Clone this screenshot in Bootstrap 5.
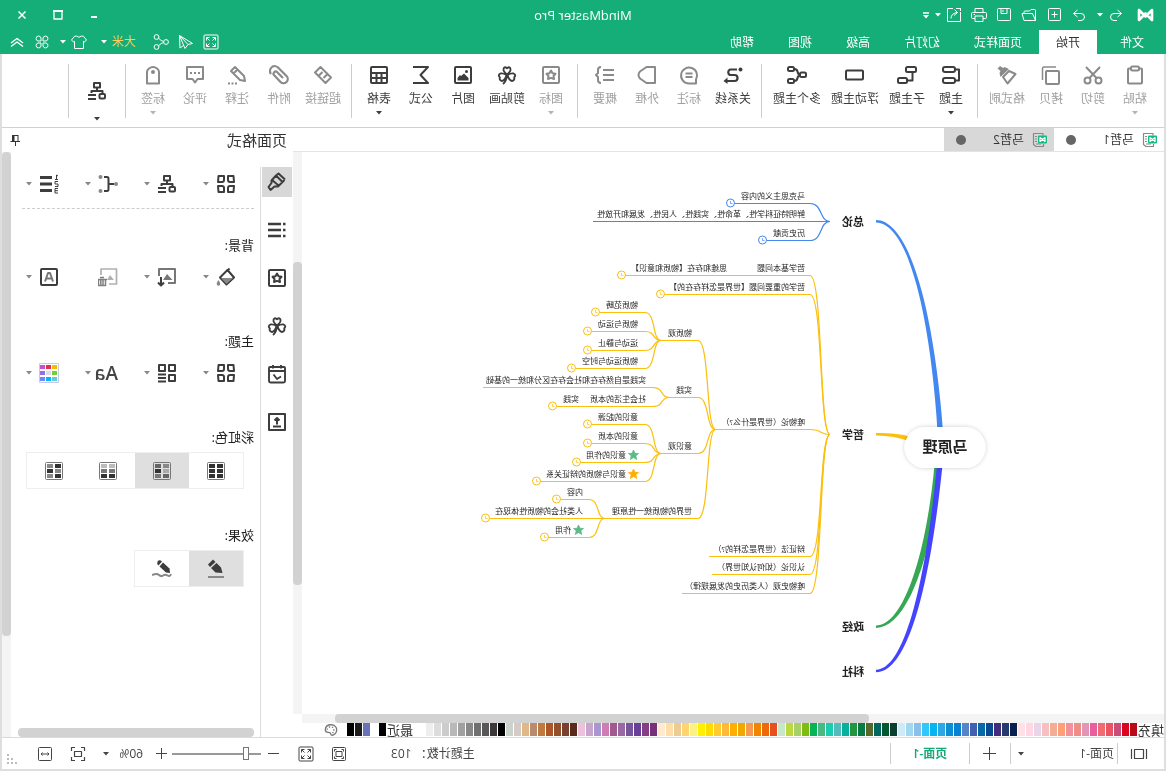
<!DOCTYPE html>
<html lang="zh-CN">
<head>
<meta charset="utf-8">
<meta name="viewport" content="width=device-width, initial-scale=1">
<title>MindMaster Pro</title>
<link rel="stylesheet" href="https://cdn.jsdelivr.net/npm/bootstrap@5.3.0/dist/css/bootstrap.min.css">
<style>
:root{--green:#16ae78;--ink:#3d3d3d;--edge:#dedede;--thumb:#d2d2d2;--track:#f4f4f4}
body{font:12px/16px "Open Sans","Noto Sans CJK SC",sans-serif;color:#333;background:#fff;overflow:hidden}
.mirror-view{transform:scaleX(-1)}
svg{display:block;fill:none;stroke:currentColor;stroke-width:2;stroke-linejoin:round}
button,select{font:inherit;color:inherit;background:none;border:0;padding:0}
.ico{width:20px;height:20px}
.ico-s{width:16px;height:16px;stroke-width:1}
.tri{width:6px;height:4px;fill:currentColor;stroke:none}
/* header */
.top-head{background:var(--green);color:#fff}
.title-row{height:30px;grid-template-columns:1fr auto 1fr}
.tool-btn{width:25px;height:24px;display:flex;align-items:center;justify-content:center}
.tri-btn{width:8px;height:24px;display:flex;align-items:center;justify-content:center}
.app-title{font-size:13px}
.menu-row{height:24px}
.menu-left{padding-left:5px}
.menu-right{padding-right:5px}
.menu-tab{padding:0 17px;height:24px;line-height:25px;color:#fff}
.menu-tab.on{background:#fff;color:#333;margin-left:6px}
.user-name{color:#ffcc5c;margin:0 4px 0 12px}
.win-btn{width:36px;height:28px;display:flex;align-items:center;justify-content:center}
/* ribbon */
.frame{border:solid var(--edge);border-width:0 2px 2px;min-height:0}
.ribbon{height:74px;border-bottom:1px solid #d0d0d0;padding:10px 8px 8px}
.rib{min-width:42px;padding:0 5px;display:flex;flex-direction:column;align-items:center;color:var(--ink);height:56px}
.rib svg.ico{margin-top:1px}
.rib span{margin:6px 0 4px;white-space:nowrap}
.rib.off{color:#8a8a8a}
.rib.off span{color:#a0a0a0}
.rib.off .tri{color:#b4b4b4}
.rib-wide{min-width:45px}
.rule{width:1px;background:#ccc;height:54px;margin:0 5px 0 6px}
/* document tabs */
.doc-row{height:24px;border-bottom:1px solid #e4e4e4}
.doc-tab{height:23px;width:110px;padding:0 12px 0 6px}
.doc-tab.on{background:#d8d8d8}
.dot{width:10px;height:10px;border-radius:50%;background:#666}
/* scroll bars */
.vbar{width:9px;background:var(--track)}
.hbar{height:9px;background:var(--track);margin-right:9px}
.thumb{background:var(--thumb);border-radius:4px}
/* map */
.map-view{background:#fff}
.map-view text{font-size:8px;fill:#222;stroke:none}
.map-view .branch{font-size:11px;font-weight:700;fill:#222}
.map-view .central{font-size:15px;font-weight:700;fill:#222}
/* palette */
.pal{height:14px;font-size:13px;line-height:14px}
.pal i{display:block;width:7px;height:13px;margin-right:1px}
/* side panel */
.side{width:291px}
.side-title{height:24px;font-size:15px;line-height:24px;padding:0 7px 0 6px}
.strip{width:33px;border-right:1px solid #dcdcdc;gap:18px;margin-top:15px;padding-left:1px}
.strip button{width:30px;height:30px;display:flex;align-items:center;justify-content:center;color:var(--ink)}
.strip button.on{background:#d8d8d8}
.props{padding-left:6px;margin-top:17px;color:var(--ink)}
.prow{height:30px}
.plabel + .prow{margin-top:7px}
.pcell{width:59px;padding-left:18px;gap:7px;display:flex;align-items:center;height:30px}
.pcell .tri{color:#888}
.plabel{font-size:13px;line-height:20px;margin-top:39px;color:#222}
.dash{border-top:1px dashed #ccc;width:232px;margin-top:9px}
.dash + .plabel{margin-top:26px}
.seg + .plabel{margin-top:36px}
.seg{border:1px solid #eee;width:max-content;margin:5px 0 0 10px;height:37px}
.seg button{width:54px;display:flex;align-items:center;justify-content:center}
.seg button.on{background:#dfdfdf}
.aa{font-size:19px;font-weight:600;line-height:20px;width:22px;margin-right:-2px;color:#444}
.hthumb{width:236px;height:9px}
/* status bar */
.status{height:32px;border-top:1px solid #dcdcdc;color:#444}
.bar{width:1px;height:21px;background:#ccc}
.status select{appearance:none;outline:0}
.status .thin{stroke-width:1;shape-rendering:crispEdges}
.page-pick{padding:0 7px 0 3px}
.page-pick select{width:90px}
.zoom-pick{margin:0 12px 0 9px}
.zoom-pick select{width:34px}
.page-name{color:#16a878;width:78px}
.zoom{appearance:none;width:89px;height:14px;margin:0;background:linear-gradient(#999,#999) center/100% 2px no-repeat}
.zoom::-webkit-slider-thumb{appearance:none;width:6px;height:13px;background:#fff;border:1px solid #777}
</style>
</head>
<body>
<svg width="0" height="0" class="position-absolute">
<symbol id="tri" viewBox="0 0 6 4"><path d="M0 0H6L3 3.6Z"/></symbol>
<symbol id="undo" viewBox="0 0 16 16"><path d="M6.500 3 2.500 6.500 6.500 10M2.500 6.500H10a3.500 3.500 0 0 1 0 7H7"/></symbol>
<symbol id="redo" viewBox="0 0 16 16"><path d="M9.500 3 13.500 6.500 9.500 10M13.500 6.500H6a3.500 3.500 0 0 0 0 7H9"/></symbol>
<symbol id="new" viewBox="0 0 16 16"><rect x="1.500" y="1.500" width="12" height="12" rx="1"/><path d="M7.500 4.500v6M4.500 7.500h6"/></symbol>
<symbol id="open" viewBox="0 0 16 16"><path d="M1.500 13.500V3.500q0-1 1-1H6l1.500 1.500H12q1 0 1 1V6M1.500 13.500H13L15 6.500H4.500L1.500 13.500"/></symbol>
<symbol id="save" viewBox="0 0 16 16"><rect x="1.500" y="1.500" width="13" height="12" rx="1"/><path d="M5 1.500v5h6v-5M9 3v2"/></symbol>
<symbol id="print" viewBox="0 0 16 16"><path d="M4 5V1.500h8V5M4 11.500H1.500q-1 0-1-1V6.500q0-1 1-1h13q1 0 1 1v4q0 1-1 1H12M4 9h8v5.500H4zM12 7.500h1.500"/></symbol>
<symbol id="export" viewBox="0 0 16 16"><path d="M9 1.500H14.500V14.500H1.500V5M1 1.500H6M1.500 1.500V4M11 11.500Q11 6.500 5 5.500M7.500 2.500 4.500 5.500 8 8.500"/></symbol>
<symbol id="full" viewBox="0 0 16 16"><rect x="1" y="1" width="14" height="14" rx="1"/><path d="M3.500 6.500v-3h3M3.500 3.500 6.500 6.500M9.500 3.500h3v3M12.500 3.500 9.500 6.500M3.500 9.500v3h3M3.500 12.500 6.500 9.500M12.500 9.500v3h-3M12.500 12.500 9.500 9.500"/></symbol>
<symbol id="send" viewBox="0 0 16 16"><path d="M14.500 1.500 1.500 9.500 6 10.500 9 14.500ZM14.500 1.500 6 10.500M14.500 1.500 14 14 10.500 11.500"/></symbol>
<symbol id="share" viewBox="0 0 16 16"><circle cx="3" cy="8" r="2.400"/><circle cx="12.500" cy="3" r="2.400"/><circle cx="12.500" cy="13" r="2.400"/><path d="M5.400 7.500Q8 7 10.300 4.300M5.400 8.500Q8 9 10.300 11.700"/></symbol>
<symbol id="shirt" viewBox="0 0 16 16"><path d="M5.500 2Q8 4.500 10.500 2L12.500 2.300 15.500 6 13.500 8 12.500 7.300V14.500H3.500V7.300L2.500 8 .5 6 3.500 2.300Z"/></symbol>
<symbol id="petals" viewBox="0 0 16 16"><path d="M7 7H4a2.500 2.500 0 1 1 3-3ZM9 7V4a2.500 2.500 0 1 1 3 3ZM7 9V12a2.500 2.500 0 1 1-3-3ZM9 9H12a2.500 2.500 0 1 1-3 3Z"/></symbol>
<symbol id="chev" viewBox="0 0 16 16"><path d="M2 9 8 4.500 14 9M2 12.500 8 8 14 12.500" stroke-width="1.400"/></symbol>
<symbol id="paste" viewBox="0 0 20 20"><rect x="3" y="3.500" width="14" height="15" rx="1"/><rect x="6" y="1.500" width="8" height="4" rx="1.500" fill="#fff"/></symbol>
<symbol id="cut" viewBox="0 0 20 20"><circle cx="4.500" cy="15.500" r="3"/><circle cx="15.500" cy="15.500" r="3"/><path d="M3 2 13.500 13M17 2 6.500 13"/></symbol>
<symbol id="copy" viewBox="0 0 20 20"><rect x="2" y="6" width="13" height="13" rx="1"/><path d="M5 2H17q1.500 0 1.500 1.500V15" stroke-width="1.500"/></symbol>
<symbol id="brush" viewBox="0 0 20 20"><path d="M1.500 9 8 6 14 12 9.500 18.500Z"/><path d="M8 4 16.500 12 17.500 8 16.500 6 19.500 3.500 17 1 14 3 12.500 2Z" fill="currentColor" stroke="none"/></symbol>
<symbol id="topic" viewBox="0 0 20 20"><rect x="6" y="2" width="12" height="5" rx="2"/><rect x="6" y="13" width="12" height="5" rx="2"/><path d="M6 4.500H2V15.500H6"/></symbol>
<symbol id="sub" viewBox="0 0 20 20"><rect x="1" y="2" width="10" height="5" rx="1.500"/><rect x="10" y="13" width="9" height="5" rx="1.500"/><path d="M4.500 7V15.500H10"/></symbol>
<symbol id="float" viewBox="0 0 20 20"><rect x="2" y="5.500" width="17" height="9" rx="1"/></symbol>
<symbol id="multi" viewBox="0 0 20 20"><rect x="1" y="7.500" width="6" height="4.500" rx="1.500"/><rect x="13" y="2" width="6" height="4" rx="1.500"/><rect x="13" y="14" width="6" height="4" rx="1.500"/><path d="M7 9.500Q9 9.500 9.500 6.500 10 4 13 4M7 10.500Q9 10.500 9.500 13 10 16 13 16"/></symbol>
<symbol id="rel" viewBox="0 0 20 20"><path d="M6 4.500H13a3 3 0 0 1 0 5.500H8.500a3 3 0 0 0 0 6H16" stroke-width="2.200"/><circle cx="2.500" cy="4.500" r="2" fill="currentColor" stroke="none"/><path d="M15.500 12.500 19.500 16 15.500 19Z" fill="currentColor" stroke="none"/></symbol>
<symbol id="callout" viewBox="0 0 20 20"><path d="M3 18.500V14.500A8 8 0 1 1 10 18.500ZM6.500 8.500h7M6.500 12h7"/></symbol>
<symbol id="bound" viewBox="0 0 20 20"><path d="M2 2H10.500L17 6.500Q18.500 8 18.500 10T17 13.500L10.500 18H2Z"/></symbol>
<symbol id="summary" viewBox="0 0 20 20"><path d="M1 5H12M1 10H12M1 15H12M14 2q3 0 3 3V8l2 2-2 2v3q0 3-3 3"/></symbol>
<symbol id="star" viewBox="0 0 20 20"><rect x="2" y="2" width="16" height="16" rx="1"/><path d="M10 5.500 11.500 8.200 14.500 8.800 12.500 11 13 14 10 12.900 7 14 7.500 11 5.500 8.800 8.500 8.200Z"/></symbol>
<symbol id="clover" viewBox="0 0 20 20"><path d="M10 9.500Q6 6 6.500 4.200 7 1 10 3.200 13 1 13.500 4.200 14 6 10 9.500ZM9.500 10Q6 8 3.500 8.500 .5 10 2.800 12.300 2 15.500 5 16 8 15.500 9.500 10ZM10.500 10Q14 8 16.500 8.500 19.500 10 17.200 12.300 18 15.500 15 16 12 15.500 10.500 10ZM10 10Q10.500 16 14 19" stroke-width="1.900"/></symbol>
<symbol id="image" viewBox="0 0 20 20"><rect x="2" y="2" width="16" height="16" rx="1"/><path d="M4.500 15.500V13L9 8.500 12 11 13 10 15.500 13V15.500Z" fill="currentColor" stroke="none"/><circle cx="6.500" cy="6.500" r="1.500" fill="currentColor" stroke="none"/></symbol>
<symbol id="sigma" viewBox="0 0 20 20"><path d="M18 2H3L10.500 10 3 18H18"/></symbol>
<symbol id="tbl" viewBox="0 0 20 20"><rect x="2" y="2" width="16" height="16" rx="1"/><path d="M2 8H18M2 13H18M7.500 8V18M12.500 8V18"/></symbol>
<symbol id="link" viewBox="0 0 20 20"><path d="M9.500 13 5.500 9 12.500 2 18 7.500 14 11.500M10.500 7 14.500 11 7.500 18 2 12.500 6 8.500"/></symbol>
<symbol id="clip" viewBox="0 0 20 20"><path d="M6 13 12.500 6.500a2.500 2.500 0 0 1 3 3L8.500 17A4 4 0 0 1 2.500 11L10.500 3A4.500 4.500 0 0 1 18 9" stroke-width="2.200"/></symbol>
<symbol id="pencil" viewBox="0 0 20 20"><path d="M2 16 3 11 12 2 16 6 7 15ZM9.500 4.500 13.500 8.500"/><path d="M10 18.500h9" stroke-dasharray="2 1.500"/></symbol>
<symbol id="comment" viewBox="0 0 20 20"><path d="M2 2H18V14H12.500L10 17.500 7.500 14H2Z"/><path d="M5 8h10" stroke-dasharray="2 2"/></symbol>
<symbol id="tag" viewBox="0 0 20 20"><path d="M4 18.500V7Q4 5 6 3.500 10 .5 14 3.500 16 5 16 7V18.500Z"/><circle cx="10" cy="7" r="2" fill="currentColor" stroke="none"/></symbol>
<symbol id="layout" viewBox="0 0 20 20"><rect x="7" y="2" width="6" height="4.500"/><path d="M10 6.500V10M4.500 13V10H15.500V12"/><rect x="2" y="13" width="5.500" height="4.500" rx="1"/><path d="M11 14H19M11 18H19" stroke-width="2"/></symbol>
<symbol id="roller" viewBox="0 0 20 20"><path d="M2 7.500 8.500 1.500 11 3.500 15.500 8.500V11L18.500 15 16.500 18 12.500 14.500H9L2.500 8M4.500 10 11 3.500M8.500 13.500 15.500 7.500"/></symbol>
<symbol id="list" viewBox="0 0 20 20"><path d="M1.500 4h2.500M1.500 10h2.500M1.500 16h2.500M6 4H19M6 10H19M6 16H19" stroke-width="2.600"/></symbol>
<symbol id="cal" viewBox="0 0 20 20"><path d="M2 4q0-1 1-1H17q1 0 1 1V17q0 1.500-1.500 1.500H3.500Q2 18.500 2 17ZM2 7H18M6 1V4.500M14 1V4.500M6 12.500 10 15 13.500 10.500" stroke-width="1.900"/></symbol>
<symbol id="upl" viewBox="0 0 20 20"><path d="M2 2H18V18H2ZM6 14.500h8M10 12.500V6M7.500 8.500 10 6 12.500 8.500"/></symbol>
<symbol id="four" viewBox="0 0 20 20"><path d="M2.500 2H8V6Q8 8 6 8H2ZM12 2H17.500L18 8H14Q12 8 12 6ZM2 12H6Q8 12 8 14V18H2.500ZM14 12H18L17.500 18H12V14Q12 12 14 12Z"/></symbol>
<symbol id="fourlist" viewBox="0 0 20 20"><path d="M2 2H8V8H2ZM12 2H18V8H12ZM2 12H8V18H2Z"/><path d="M11 11.500H19M11 15H19M11 18.500H19" stroke-width="1.800"/></symbol>
<symbol id="brace" viewBox="0 0 20 20"><path d="M4 10H9M14 3H11Q9.500 3 9.500 5V15Q9.500 17 11 17H14"/><g fill="#888" stroke="none"><circle cx="2" cy="10" r="2"/><circle cx="17.500" cy="3" r="2"/><circle cx="17.500" cy="17" r="2"/></g></symbol>
<symbol id="nums" viewBox="0 0 20 20"><path d="M7 3.500H19M7 10H19M7 16.500H19" stroke-width="3"/><path d="M1 2 2.500 1V5M1 5.500H4M1 7.500H4V10H1V12.500H4M1 14.500H4V19H1M1 16.700H4" stroke-width="1"/></symbol>
<symbol id="bucket" viewBox="0 0 20 20"><path d="M6.500 1.500 9 4"/><path d="M8.500 3 2 10.500 9.500 17.500 16 10.500Z"/><path d="M3 11H15L9.500 17Z" fill="#888" stroke="none"/><path d="M17.500 13Q20 16 19 18 17.500 19.500 16 18 15.200 16 17.500 13Z" fill="#888" stroke="none"/></symbol>
<symbol id="imgdown" viewBox="0 0 20 20"><path d="M9 16H2V2H18V9" stroke="#777"/><path d="M16 10V18M13 15.500 16 18.500 19 15.500"/><path d="M4.500 13 10 7 14 13Z" fill="#777" stroke="none"/></symbol>
<symbol id="imgdel" viewBox="0 0 20 20"><path d="M9 17H1.500V2H17V8" stroke-width="1.700"/><path d="M4 13 8 8 11 13Z" fill="currentColor" stroke="none"/><path d="M11 12.500H21M12.500 13V18.500H19.500V13M15 13v5M17.200 13v5M14 10.500h4" stroke="#808080" stroke-width="1.500"/></symbol>
<symbol id="boxa" viewBox="0 0 20 20"><rect x="2" y="2" width="16" height="16" rx="1"/><path d="M6 14.500 9 6H11L14 14.500M7.500 11.500H12.500" stroke="#777"/></symbol>
<symbol id="fit" viewBox="0 0 16 16"><path d="M1.500 5V1.500H5M11 1.500h3.500V5M14.500 11v3.500H11M5 14.500H1.500V11M4.500 5.500h7v5h-7z" stroke-width="1.200"/></symbol>
<symbol id="wide" viewBox="0 0 16 16"><rect x="1.500" y="1.500" width="13" height="13" rx="1"/><path d="M4 8h8M5.500 6.500 4 8 5.500 9.500M10.500 6.500 12 8 10.500 9.500"/></symbol>
<symbol id="focus" viewBox="0 0 16 16"><rect x="1.500" y="1.500" width="13" height="13" rx="1"/><path d="M5 5.500h6v5H5zM3.500 5.500v-2h2M10.500 3.500h2v2M12.500 10.500v2h-2M5.500 12.500h-2v-2"/></symbol>
<symbol id="slide" viewBox="0 0 18 16"><path d="M1.500 3v10M16.500 3v10M4.500 3.500h9v9h-9z" stroke-width="1.200"/></symbol>
<symbol id="pin" viewBox="0 0 12 12"><path d="M3 1v6M3 1.500H8M1 7.500H10.500M5.500 7.500V12" stroke-width="1"/><path d="M6.500 1H9V8H6.500Z" fill="currentColor" stroke="none"/></symbol>
<symbol id="doc" viewBox="0 0 16 16"><path d="M5 3.500V1.500H14.500V12.500L12 14.500H4.500V12M7 12h5M11 4.500h2M11 7h2M11 9.500h2" stroke="#888" stroke-width="1.200"/><rect x="1" y="3.500" width="9" height="8" rx="1" fill="#12b981" stroke="none"/><path d="M3 9.500V5.500L8 9.500V5.500Z" stroke="#fff" stroke-width="1.200"/></symbol>
<symbol id="logo" viewBox="0 0 17 14"><path d="M2 12V2L8.500 8.500 15 2V12L8.500 5.500Z" stroke-width="2.600"/></symbol>
<symbol id="palette" viewBox="0 0 16 16"><path d="M8 2C3.500 2 1.500 5 1.500 8S4 14 7 14c2 0 1-2.500 2.500-3 2-.5 5 .5 5-3S12 2 8 2Z" stroke="#777" stroke-width="1.500"/><path d="M4 8h1.500M5.500 5h1.500M9 4.500h1.500M11.500 7h1.500M5 11h1.500" stroke="#777" stroke-width="1.700"/></symbol>
</svg>

<div class="mirror-view vh-100 d-flex flex-column">
<header class="top-head">
  <div class="title-row d-grid align-items-center">
    <div class="d-flex align-items-center ps-2">
      <svg class="ms-1 me-2" width="17" height="14"><use href="#logo"/></svg>
      <button class="tool-btn" aria-label="撤销"><svg class="ico-s"><use href="#undo"/></svg></button>
      <button class="tri-btn me-1" aria-label="撤销列表"><svg class="tri"><use href="#tri"/></svg></button>
      <button class="tool-btn" aria-label="重做"><svg class="ico-s"><use href="#redo"/></svg></button>
      <button class="tool-btn" aria-label="新建"><svg class="ico-s"><use href="#new"/></svg></button>
      <button class="tool-btn" aria-label="打开"><svg class="ico-s"><use href="#open"/></svg></button>
      <button class="tool-btn" aria-label="保存"><svg class="ico-s"><use href="#save"/></svg></button>
      <button class="tool-btn" aria-label="打印"><svg class="ico-s"><use href="#print"/></svg></button>
      <button class="tool-btn" aria-label="导出"><svg class="ico-s"><use href="#export"/></svg></button>
      <button class="tri-btn me-1" aria-label="导出列表"><svg class="tri"><use href="#tri"/></svg></button>
      <button class="tri-btn flex-column" aria-label="自定义"><svg width="6" height="3"><path d="M0 1H6" stroke-width="1.500"/></svg><svg class="tri"><use href="#tri"/></svg></button>
    </div>
    <div class="app-title">MindMaster Pro</div>
    <div class="d-flex justify-content-end pe-1">
      <button class="win-btn" aria-label="最小化"><svg width="10" height="10"><path d="M2 7H8"/></svg></button>
      <button class="win-btn" aria-label="最大化"><svg width="10" height="10"><path d="M1 1H9V9H1Z" stroke-width="1.300"/><path d="M0 1H10"/></svg></button>
      <button class="win-btn" aria-label="关闭"><svg width="10" height="10"><path d="M1.500 1.500 8.500 8.500M8.500 1.500 1.500 8.500" stroke-width="1.500"/></svg></button>
    </div>
  </div>
  <div class="menu-row d-flex justify-content-between">
    <div class="menu-left d-flex">
      <button class="menu-tab">文件</button><button class="menu-tab on">开始</button><button class="menu-tab">页面样式</button><button class="menu-tab">幻灯片</button><button class="menu-tab">高级</button><button class="menu-tab">视图</button><button class="menu-tab">帮助</button>
    </div>
    <div class="menu-right d-flex align-items-center">
      <button class="tool-btn" aria-label="全屏"><svg class="ico-s"><use href="#full"/></svg></button>
      <button class="tool-btn" aria-label="发送"><svg class="ico-s"><use href="#send"/></svg></button>
      <button class="tool-btn" aria-label="分享"><svg class="ico-s"><use href="#share"/></svg></button>
      <button class="user-name">大米</button>
      <button class="tri-btn me-2" aria-label="账户"><svg class="tri"><use href="#tri"/></svg></button>
      <button class="tool-btn" aria-label="皮肤"><svg class="ico-s"><use href="#shirt"/></svg></button>
      <button class="tri-btn" aria-label="皮肤列表"><svg class="tri"><use href="#tri"/></svg></button>
      <button class="tool-btn ms-1" aria-label="应用"><svg class="ico-s"><use href="#petals"/></svg></button>
      <button class="tool-btn" aria-label="收起"><svg class="ico-s"><use href="#chev"/></svg></button>
    </div>
  </div>
</header>

<div class="frame flex-grow-1 d-flex flex-column">
<div class="ribbon d-flex">
  <button class="rib off"><svg class="ico"><use href="#paste"/></svg><span>粘贴</span><svg class="tri"><use href="#tri"/></svg></button>
  <button class="rib off"><svg class="ico"><use href="#cut"/></svg><span>剪切</span></button>
  <button class="rib off"><svg class="ico"><use href="#copy"/></svg><span>拷贝</span></button>
  <button class="rib off"><svg class="ico"><use href="#brush"/></svg><span>格式刷</span></button>
  <div class="rule"></div>
  <button class="rib"><svg class="ico"><use href="#topic"/></svg><span>主题</span><svg class="tri"><use href="#tri"/></svg></button>
  <button class="rib"><svg class="ico"><use href="#sub"/></svg><span>子主题</span></button>
  <button class="rib"><svg class="ico"><use href="#float"/></svg><span>浮动主题</span></button>
  <button class="rib"><svg class="ico"><use href="#multi"/></svg><span>多个主题</span></button>
  <div class="rule"></div>
  <button class="rib"><svg class="ico"><use href="#rel"/></svg><span>关系线</span></button>
  <button class="rib off"><svg class="ico"><use href="#callout"/></svg><span>标注</span></button>
  <button class="rib off"><svg class="ico"><use href="#bound"/></svg><span>外框</span></button>
  <button class="rib off"><svg class="ico"><use href="#summary"/></svg><span>概要</span></button>
  <div class="rule"></div>
  <button class="rib off"><svg class="ico"><use href="#star"/></svg><span>图标</span><svg class="tri"><use href="#tri"/></svg></button>
  <button class="rib"><svg class="ico"><use href="#clover"/></svg><span>剪贴画</span></button>
  <button class="rib"><svg class="ico"><use href="#image"/></svg><span>图片</span></button>
  <button class="rib"><svg class="ico"><use href="#sigma"/></svg><span>公式</span></button>
  <button class="rib"><svg class="ico"><use href="#tbl"/></svg><span>表格</span><svg class="tri"><use href="#tri"/></svg></button>
  <div class="rule"></div>
  <button class="rib off"><svg class="ico"><use href="#link"/></svg><span>超链接</span></button>
  <button class="rib off"><svg class="ico"><use href="#clip"/></svg><span>附件</span></button>
  <button class="rib off"><svg class="ico"><use href="#pencil"/></svg><span>注释</span></button>
  <button class="rib off"><svg class="ico"><use href="#comment"/></svg><span>评论</span></button>
  <button class="rib off"><svg class="ico"><use href="#tag"/></svg><span>标签</span><svg class="tri"><use href="#tri"/></svg></button>
  <div class="rule"></div>
  <button class="rib rib-wide pt-3" aria-label="布局"><svg class="ico mb-3 flex-shrink-0"><use href="#layout"/></svg><svg class="tri flex-shrink-0"><use href="#tri"/></svg></button>
  <div class="rule"></div>
</div>

<div class="flex-grow-1 d-flex" style="min-height:0">
  <main class="flex-grow-1 d-flex flex-column" style="min-width:0">
    <div class="doc-row d-flex">
      <div class="doc-tab d-flex align-items-center"><svg class="ico-s me-2"><use href="#doc"/></svg>马哲1<span class="dot ms-auto"></span></div>
      <div class="doc-tab on d-flex align-items-center"><svg class="ico-s me-2"><use href="#doc"/></svg>马哲2<span class="dot ms-auto"></span></div>
    </div>
    <div class="flex-grow-1 d-flex" style="min-height:0">
      <svg class="map-view flex-grow-1" id="map" height="562"></svg>
      <div class="vbar d-flex flex-column"><div style="flex:110"></div><div class="thumb" style="flex:323"></div><div style="flex:129"></div></div>
    </div>
    <div class="hbar d-flex"><div style="flex:295"></div><div class="thumb" style="flex:534"></div><div style="flex:33"></div></div>
    <div class="pal d-flex" id="pal"></div>
  </main>
  <aside class="side d-flex flex-column">
    <div class="side-title d-flex justify-content-between align-items-center">页面格式<svg width="12" height="12"><use href="#pin"/></svg></div>
    <div class="flex-grow-1 d-flex" style="min-height:0">
      <div class="strip d-flex flex-column">
        <button class="on" aria-label="页面格式"><svg class="ico"><use href="#roller"/></svg></button>
        <button aria-label="大纲"><svg class="ico"><use href="#list"/></svg></button>
        <button aria-label="图标"><svg class="ico"><use href="#star"/></svg></button>
        <button aria-label="剪贴画"><svg class="ico"><use href="#clover"/></svg></button>
        <button aria-label="任务"><svg class="ico"><use href="#cal"/></svg></button>
        <button aria-label="上传"><svg class="ico"><use href="#upl"/></svg></button>
      </div>
      <div class="props flex-grow-1 d-flex flex-column">
        <div class="prow d-flex">
          <button class="pcell" aria-label="样式"><svg class="ico"><use href="#four"/></svg><svg class="tri"><use href="#tri"/></svg></button>
          <button class="pcell" aria-label="布局"><svg class="ico"><use href="#layout"/></svg><svg class="tri"><use href="#tri"/></svg></button>
          <button class="pcell" aria-label="连接线"><svg class="ico"><use href="#brace"/></svg><svg class="tri"><use href="#tri"/></svg></button>
          <button class="pcell" aria-label="编号"><svg class="ico"><use href="#nums"/></svg><svg class="tri"><use href="#tri"/></svg></button>
        </div>
        <div class="dash"></div>
        <div class="plabel">背景:</div>
        <div class="prow d-flex">
          <button class="pcell" aria-label="背景色"><svg class="ico"><use href="#bucket"/></svg><svg class="tri"><use href="#tri"/></svg></button>
          <button class="pcell" aria-label="背景图"><svg class="ico"><use href="#imgdown"/></svg><svg class="tri"><use href="#tri"/></svg></button>
          <button class="pcell" aria-label="移除背景" style="color:#b0b0b0"><svg class="ico" overflow="visible"><use href="#imgdel"/></svg></button>
          <button class="pcell" aria-label="水印"><svg class="ico"><use href="#boxa"/></svg><svg class="tri"><use href="#tri"/></svg></button>
        </div>
        <div class="plabel">主题:</div>
        <div class="prow d-flex">
          <button class="pcell" aria-label="主题"><svg class="ico"><use href="#four"/></svg><svg class="tri"><use href="#tri"/></svg></button>
          <button class="pcell" aria-label="主题样式"><svg class="ico"><use href="#fourlist"/></svg><svg class="tri"><use href="#tri"/></svg></button>
          <button class="pcell" aria-label="主题字体"><span class="aa">Aa</span><svg class="tri"><use href="#tri"/></svg></button>
          <button class="pcell" aria-label="主题颜色"><svg class="ico" style="stroke:none"><rect x=".5" y=".5" width="19" height="19" stroke="#c5cbe2" stroke-width="1"/><path d="M2 2h5v4H2z" fill="#eec000"/><path d="M8 2h5v4H8z" fill="#e0304e"/><path d="M14 2h5v4h-5z" fill="#c552cc"/><path d="M2 8h5v4H2z" fill="#70cf3c"/><path d="M8 8h5v4H8z" fill="#ddd"/><path d="M14 8h5v4h-5z" fill="#926ee8"/><path d="M2 14h5v4H2z" fill="#62ccd8"/><path d="M8 14h5v4H8z" fill="#06b4fa"/><path d="M14 14h5v4h-5z" fill="#7286fa"/></svg><svg class="tri"><use href="#tri"/></svg></button>
        </div>
        <div class="plabel">彩虹色:</div>
        <div class="seg d-flex" id="rainbow"></div>
        <div class="plabel">效果:</div>
        <div class="seg d-flex">
          <button class="on" aria-label="钢笔"><svg class="ico"><path d="M2 18H18" stroke="#888"/><path d="M3.500 14 5 8.500 9.500 4 15 9 10.500 13.500Z" fill="currentColor" stroke="none"/><path d="M10.500 3 13 .5 18 5.500 16 8Z" fill="currentColor" stroke="none"/></svg></button>
          <button aria-label="手绘"><svg class="ico"><path d="M1 15Q2 18 4.500 16.500T9 16.500 13 16 20 16" stroke="#888"/><path d="M2 14 2.500 9.500 9 3.500 12.500 7.500 6 13.500Z" fill="currentColor" stroke="none"/><path d="M10 2.500Q12.500 0 14.500 2.500 15.500 4.500 13.500 6.500Z" fill="currentColor" stroke="none"/></svg></button>
        </div>
        <div class="thumb hthumb mt-auto mb-0"></div>
      </div>
      <div class="vbar d-flex flex-column"><div class="thumb" style="flex:484"></div><div style="flex:101"></div></div>
    </div>
  </aside>
</div>

<footer class="status d-flex align-items-center">
  <button class="tool-btn ms-2" style="width:34px" aria-label="页面列表"><svg width="18" height="16"><use href="#slide"/></svg></button>
  <div class="bar ms-1"></div>
  <label class="page-pick d-flex align-items-center"><select aria-label="页面"><option>页面-1</option></select><svg class="tri"><use href="#tri"/></svg></label>
  <div class="bar"></div>
  <button class="d-flex align-items-center justify-content-center" style="width:40px" aria-label="添加页面"><svg class="thin" width="13" height="13"><path d="M6.500 0V13M0 6.500H13"/></svg></button>
  <div class="bar"></div>
  <button class="page-name fw-semibold">页面-1</button>
  <div class="bar"></div>
  <div class="ms-auto me-5 pe-0" id="count">主题计数： 103</div>
  <button class="tool-btn me-2" style="margin-left:-9px" aria-label="聚焦"><svg class="ico-s"><use href="#focus"/></svg></button>
  <button class="tool-btn me-2" aria-label="全屏"><svg class="ico-s"><use href="#full"/></svg></button>
  <button class="tool-btn" aria-label="缩小"><svg class="thin" width="11" height="11"><path d="M0 5.500H11"/></svg></button>
  <input class="zoom" type="range" min="0" max="100" value="14" aria-label="缩放">
  <button class="tool-btn" style="width:20px" aria-label="放大"><svg class="thin" width="11" height="11"><path d="M5.500 0V11M0 5.500H11"/></svg></button>
  <label class="zoom-pick d-flex align-items-center"><select aria-label="比例"><option>60%</option></select><svg class="tri"><use href="#tri"/></svg></label>
  <button class="tool-btn me-2" aria-label="适应页面"><svg class="ico-s"><use href="#fit"/></svg></button>
  <button class="tool-btn" aria-label="适应宽度"><svg class="ico-s"><use href="#wide"/></svg></button>
  <svg width="11" height="11" class="align-self-end mb-1 ms-3 me-1"><path d="M8 1h2M8 5h2M4 5h2M8 9h2M4 9h2M0 9h2" stroke="#bbb"/></svg>
</footer>
</div>
</div>

<script src="https://cdn.jsdelivr.net/npm/bootstrap@5.3.0/dist/js/bootstrap.bundle.min.js"></script>
<script>
// Colour swatches of the fill palette
const fills = 'b80a18 d9061e cb4e7a eb5463 f06c73 ea609e e296b6 ef8e86 f0919c ff9f78 f2ae94 f7bfbf ead5e8 ffd6e4 ffe0e6 0a2150 263a6e 422c7c 0a4a92 0868a8 4262b0 5585c6 0883d4 0b90d6 2da8e6 06b4f0 30c8fa 89c0ea a0d8ef cfeaf6 0a4030 045830 006860 566a2c 087c44 229640 06b09c 52bcbc 1accb0 4ab880 06b458 80bc10 a8d068 bcd840 c8e6ca e85020 ee6a08 f28500 f59a50 f0a800 ffae00 ffb838 ffcc30 ffdc00 fff000 fcf284 ffd470 eacc94 ffdda8 ffead0 7a3078 853e86 684098 76559c 9a68a2 a05a90 cf7cb4 a896d0 c8a6cc edc0dc 5a2a1a 7a4030 94502a ac562a c07a40 b88a70 e0b888 d4cac8 cad2ca 000000 3c3838 585858 707070 888888 a0a0a0 b8b8b8 cccccc dcdcdc eeeeee'.split(' ');
const recent = '000000 ffffff 6a72ba 1c1c1c 000000'.split(' ');
const sw = list => list.map(c => `<i class="flex-shrink-0" style="background:#${c}"></i>`).join('');
document.getElementById('pal').innerHTML =
  `<span style="width:27px" class="flex-shrink-0">填充</span>${sw(fills)}<span class="ms-2 ps-1 flex-shrink-0 text-nowrap" style="width:31px">最近</span>${sw(recent)}<svg class="ms-2 flex-shrink-0" width="14" height="14"><use href="#palette"/></svg>`;

// Rainbow colour modes
const modes = [['333','333','333','333','333','333'],['888','666','aaa','333','666','777'],['bbb','bbb','777','777','333','333'],['333','888','888','333','333','888']];
document.getElementById('rainbow').innerHTML = modes.map((m, i) =>
  `<button class="${i === 1 ? 'on' : ''}" aria-label="彩虹 ${i + 1}"><svg class="ico"><rect x="1.500" y="1.500" width="17" height="17" rx="1" stroke="#777" stroke-width="1"/>` +
  m.map((c, k) => `<rect x="${k % 2 ? 11 : 3}" y="${3 + (k >> 1) * 5}" width="6" height="4" fill="#${c}" stroke="none"/>`).join('') + '</svg></button>').join('');

// Mind map: hub = [x, y, line start, colour], child = [line y, line end, text x, text, badge x, star colour, second text x, second text]
const Y = '#fbbf0c', B = '#4288f0';
const hubs = [
 [336,221.5,356,B,[[203.5,431,361,'马克思主义的内容',435.5],[221.5,573,361,'鲜明特征科学性、革命性、实践性、人民性、发展和开放性'],[240.5,399,361,'历史贡献',403.5]]],
 [336,434.5,356,Y,[[275.5,540,361,'哲学基本问题',544.5,0,439,'思维和存在【物质和意识】'],[294.5,501,361,'哲学的重要问题【世界是怎样存在的】',505.5],[429.5,451,361,'唯物论（世界是什么?）'],[556.5,457,361,'辩证法（世界是怎样的?）'],[574.5,454,361,'认识论（如何认知世界）'],[593.5,484,361,'唯物史观（人类历史的发展规律）']]],
 [450.5,429.5,468,Y,[[340.5,505,474,'物质观'],[397.5,497,474,'实践'],[453.5,505,474,'意识观'],[518.5,561,474,'世界的物质统一性原理']]],
 [505,340.5,521,Y,[[312.5,566,528,'物质范畴',570.5],[331.5,574,528,'物质与运动',578.5],[350.5,574,528,'运动与静止',578.5],[368.5,590,528,'物质运动与时空',594.5]]],
 [497,397.5,513,Y,[[387.5,683,520,'实践是自然存在和社会存在区分和统一的基础'],[406.5,609,520,'社会生活的本质',613.5,0,587,'实践']]],
 [505,453.5,521,Y,[[424.5,574,528,'意识的起源',578.5],[443.5,574,528,'意识的本质',578.5],[462.5,585,540,'意识的作用',589.5,'#5bbb87'],[481.5,625,540,'意识与物质的辩证关系',629.5,'#ffae00']]],
 [561,518.5,577,Y,[[499.5,605,583,'内容',609.5],[518.5,676,583,'人类社会的物质性体现在',680.5],[537.5,617,595,'作用',621.5,'#5bbb87']]]
];
let s = `<defs><filter id="sh" x="-20%" y="-30%" width="140%" height="160%"><feDropShadow dx="0" dy="0" stdDeviation="2" flood-opacity=".2"/></filter></defs><g transform="translate(-2 -152)">
<g stroke="none"><path fill="#34a853" d="M290 625.500C264 625.500 240 560 231 460L226 460C233 560 260 628 290 628Z"/>
<path fill="#4444ff" d="M290 669.700C263 669.700 241 590 228.500 460L223 460C236 590 259 672.300 290 672.300Z"/>
<path fill="#4288f0" d="M290 220C259 220 233 300 223 432L228.500 432C237 300 261 222.500 290 222.500Z"/>
<path fill="#fbbf0c" d="M290 433C275 433 263 434 256 437L256 442C266 437 278 436 290 435.500Z"/></g>
<rect x="180.500" y="427" width="81" height="41" rx="20.500" fill="#fff" stroke="none" filter="url(#sh)"/>
<text class="central" x="221" y="452" text-anchor="middle">马原理</text>`;
[['总论',226],['哲学',439],['政经',631],['科社',676]].forEach(b => s += `<text class="branch" x="302" y="${b[1]}">${b[0]}</text>`);
for (const [hx, hy, lx, col, kids] of hubs) for (const [y, end, tx, t, bx, star, tx2, t2] of kids) {
  const m = (hx + lx) / 2;
  s += `<path stroke="${col}" stroke-width="1.200" d="M${hx} ${hy}C${m + 1} ${hy} ${m - 3} ${y} ${lx} ${y}H${end}"/><text x="${tx}" y="${y - 4.5}">${t}</text>`;
  if (bx) s += `<g stroke="${col}" stroke-width="1"><circle cx="${bx}" cy="${y - .5}" r="4" fill="#fff"/><path d="M${bx} ${y - 2.5}v2.500h-2" stroke-opacity=".7"/></g>`;
  if (t2) s += `<text x="${tx2}" y="${y - 4.5}">${t2}</text>`;
  if (star) s += `<path transform="translate(${tx - 7.5} ${y - 7.5})" fill="${star}" stroke="${star}" stroke-width=".8" d="M0-5 1.500-1.700 5-1.500 2.300.8 3.200 4.500 0 2.500-3.200 4.500-2.300.8-5-1.500-1.500-1.700Z"/>`;
}
document.getElementById('map').innerHTML = s + '</g>';
</script>
</body>
</html>
